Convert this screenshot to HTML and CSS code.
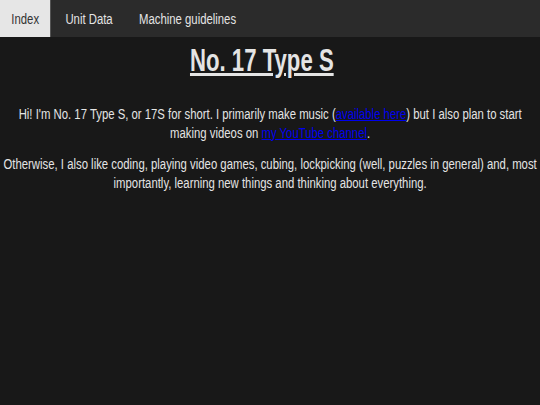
FILE: index.html
```html
<!DOCTYPE html>
<html>
<head>
<meta charset="utf-8">
<link rel="stylesheet" href="styles.css">
</head>
<body>
<div class="frame">
<div class="page">
<nav class="topnav">
  <a class="tab active" href="#">Index</a>
  <a class="tab" href="#">Unit Data</a>
  <a class="tab" href="#">Machine guidelines</a>
</nav>
<main class="content">
  <h1 class="title">No. 17 Type S</h1>
  <p>Hi! I'm No. 17 Type S, or 17S for short. I primarily make music (<a href="#">available here</a>) but I also plan to start making videos on <a href="#">my YouTube channel</a>.</p>
  <p>Otherwise, I also like coding, playing video games, cubing, lockpicking (well, puzzles in general) and, most importantly, learning new things and thinking about everything.</p>
</main>
</div>
</div>
</body>
</html>
```
FILE: styles.css
```css
html, body {
  margin: 0;
  padding: 0;
  background: #181818;
  color: #e4e4e4;
  font-family: "Liberation Sans", Arial, sans-serif;
  overflow: hidden;
}
.frame {
  width: 540px;
  height: 405px;
  overflow: hidden;
}
.page {
  width: 667px;
  transform: scaleX(0.81);
  transform-origin: 0 0;
}
.topnav {
  display: flex;
  background: #2b2b2b;
  height: 37px;
}
.tab {
  display: flex;
  align-items: center;
  padding: 0 14px;
  color: #e4e4e4;
  text-decoration: none;
  font-size: 14px;
}
.tab + .tab {
  margin-left: 4.5px;
}
.tab.active {
  background: #e6e6e6;
  color: #333;
}
.content {
  text-align: center;
  padding: 0 2px;
}
.title {
  font-size: 32px;
  line-height: 36px;
  font-weight: bold;
  text-decoration: underline;
  margin: 5px 0 0;
  padding-right: 24px;
  transform: scaleX(0.855);
}
p {
  font-size: 14px;
  line-height: 19px;
  margin: 12px 0 0;
}
.title + p {
  margin-top: 27px;
}
p a {
  color: #0000ee;
}
```
